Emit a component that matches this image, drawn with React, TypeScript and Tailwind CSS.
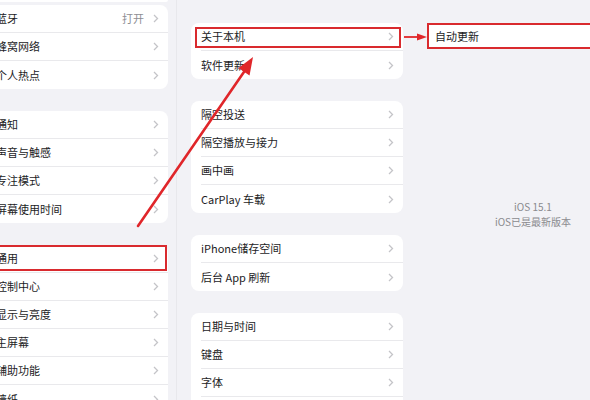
import React from "react";

type Row = { label: string; value?: string };

const font = { fontFamily: '"Noto Sans CJK SC", "Noto Sans", sans-serif' };

function Chevron() {
  return (
    <svg width="6" height="9" viewBox="0 0 6 9" className="shrink-0">
      <polyline points="1,1 4.5,4.5 1,8" fill="none" stroke="#c4c4c8" strokeWidth="1.3" />
    </svg>
  );
}

function Card({
  rows,
  highlight,
  leftCut,
}: {
  rows: Row[];
  highlight?: number;
  leftCut?: boolean;
}) {
  return (
    <div className={`bg-white ${leftCut ? "rounded-r-[8px]" : "rounded-[8px]"}`}>
      {rows.map((r, i) => (
        <div key={r.label} className="relative h-[28px] flex items-center">
          <div
            className={`flex-1 h-full flex items-center pr-[9px] ${
              leftCut ? "-ml-[4px]" : "ml-[10px]"
            } ${i < rows.length - 1 ? "border-b border-[#e9e9ec]" : ""}`}
          >
            <span className="flex-1 text-[11px] text-[#1c1c1e]">{r.label}</span>
            {r.value && (
              <span className="text-[11px] text-[#8e8e93] mr-[9px]">{r.value}</span>
            )}
            <Chevron />
          </div>
          {highlight === i && (
            <div
              className={`absolute border-2 border-[#d92a2e] ${
                leftCut ? "left-[-2px] right-[1px] top-[0px] bottom-[2px]" : "left-[4px] right-[2px] top-[4px] bottom-[3px]"
              }`}
            />
          )}
        </div>
      ))}
    </div>
  );
}

export default function App() {
  return (
    <div className="relative w-[590px] h-[400px] overflow-hidden bg-[#f2f2f6]" style={font}>
      <div className="flex h-full">
        {/* Sidebar */}
        <div className="w-[168px] shrink-0 flex flex-col gap-[22px]">
          <div className="flex flex-col">
            <div className="h-[2px] bg-white rounded-br-[6px]" />
            <div className="h-[3px]" />
            <Card leftCut rows={[{ label: "蓝牙", value: "打开" }, { label: "蜂窝网络" }, { label: "个人热点" }]} />
          </div>
          <Card leftCut rows={[{ label: "通知" }, { label: "声音与触感" }, { label: "专注模式" }, { label: "屏幕使用时间" }]} />
          <Card
            leftCut
            highlight={0}
            rows={[
              { label: "通用" },
              { label: "控制中心" },
              { label: "显示与亮度" },
              { label: "主屏幕" },
              { label: "辅助功能" },
              { label: "墙纸" },
            ]}
          />
        </div>

        <div className="w-[8px] shrink-0" />
        <div className="w-px shrink-0 bg-[#e8e8ec]" />
        <div className="w-[14px] shrink-0" />

        {/* General */}
        <div className="w-[212px] shrink-0 pt-[23px] flex flex-col gap-[22px]">
          <Card highlight={0} rows={[{ label: "关于本机" }, { label: "软件更新" }]} />
          <Card rows={[{ label: "隔空投送" }, { label: "隔空播放与接力" }, { label: "画中画" }, { label: "CarPlay 车载" }]} />
          <Card rows={[{ label: "iPhone储存空间" }, { label: "后台 App 刷新" }]} />
          <Card rows={[{ label: "日期与时间" }, { label: "键盘" }, { label: "字体" }, { label: "语言与地区" }]} />
        </div>

        <div className="w-[24px] shrink-0" />

        {/* Software update */}
        <div className="w-[212px] shrink-0 pt-[23px] flex flex-col">
          <div className="h-[26px] bg-white border-2 border-[#d92a2e] flex items-center pl-[6px]">
            <span className="text-[11px] text-[#1c1c1e]">自动更新</span>
          </div>
          <div className="mt-[150px] flex flex-col items-center text-[10px] leading-[15px] text-[#8a8a8e]">
            <span>iOS 15.1</span>
            <span>iOS已是最新版本</span>
          </div>
        </div>
      </div>

      {/* Annotation arrows */}
      <svg className="absolute inset-0 pointer-events-none" width="590" height="400">
        <line x1="138" y1="226" x2="246" y2="69" stroke="#e0262a" strokeWidth="2.6" strokeLinecap="round" />
        <polygon points="253,57 249.5,75.5 238.5,68" fill="#e0262a" />
        <line x1="404" y1="37" x2="418" y2="37" stroke="#e0262a" strokeWidth="1.8" />
        <polygon points="427,37 417,33.5 417,40.5" fill="#e0262a" />
      </svg>
    </div>
  );
}
